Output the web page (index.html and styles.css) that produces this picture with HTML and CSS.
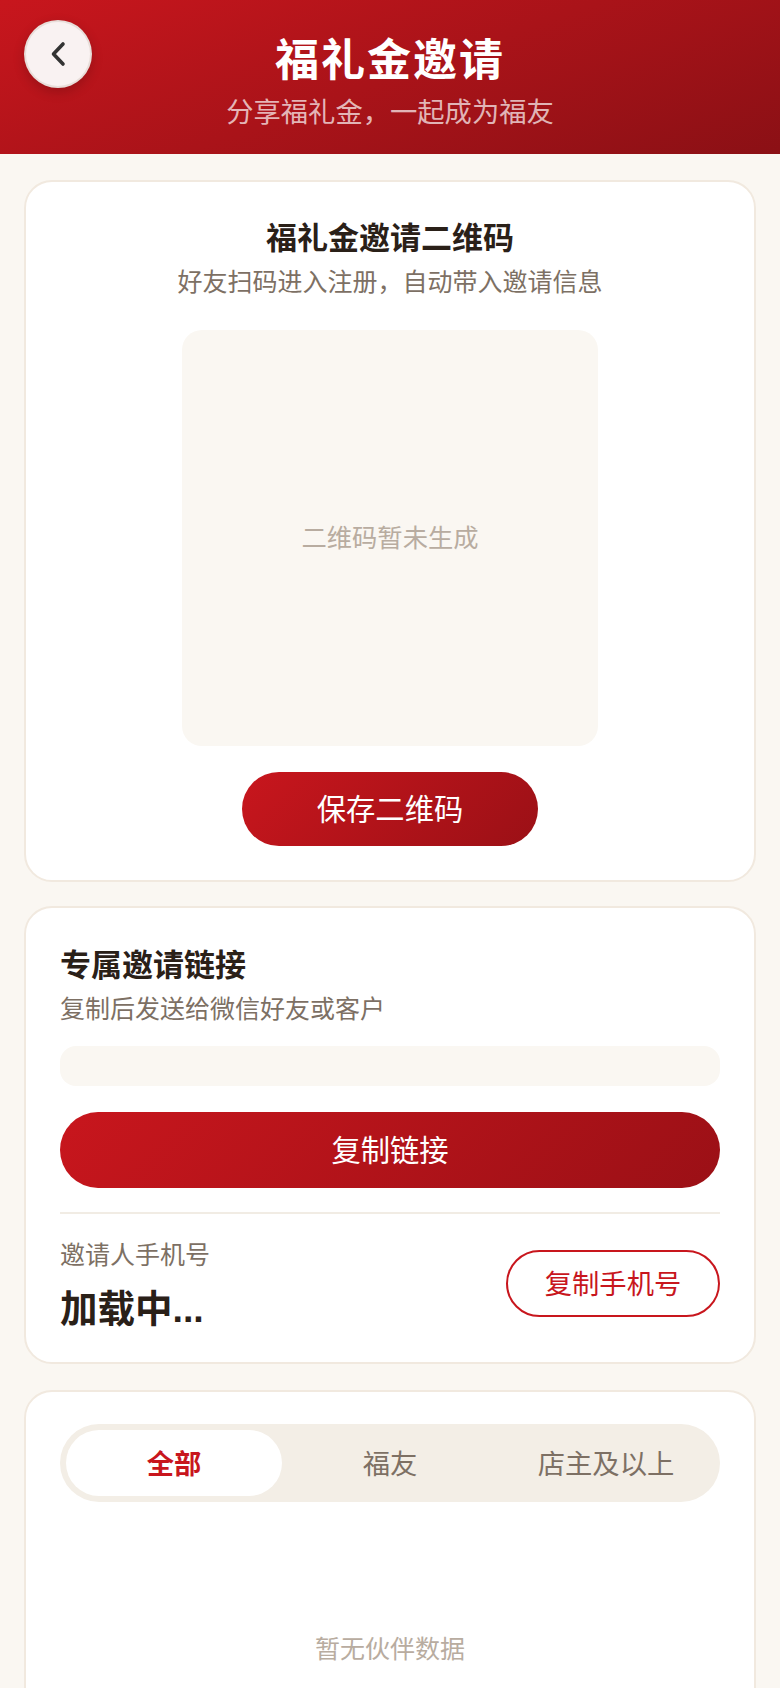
FILE: index.html
```html
<!DOCTYPE html>
<html lang="zh-CN">
<head>
<meta charset="utf-8">
<title>福礼金邀请</title>
<link rel="stylesheet" href="styles.css">
</head>
<body>
<div class="page">
  <header class="hero">
    <button class="back" aria-label="返回">
      <svg width="24" height="28" viewBox="0 0 24 28" class="back-icon"><path d="M17 4 L7.5 14 L17 24" fill="none" stroke="#333333" stroke-width="3.6" stroke-linecap="round" stroke-linejoin="round"/></svg>
    </button>
    <h1 class="hero-title">福礼金邀请</h1>
    <p class="hero-sub">分享福礼金，一起成为福友</p>
  </header>
  <main class="content">
    <section class="card card-qr">
      <h2 class="qr-title">福礼金邀请二维码</h2>
      <p class="qr-sub">好友扫码进入注册，自动带入邀请信息</p>
      <div class="qr-box">二维码暂未生成</div>
      <button class="btn btn-save">保存二维码</button>
    </section>
    <section class="card card-link">
      <h2 class="link-title">专属邀请链接</h2>
      <p class="link-sub">复制后发送给微信好友或客户</p>
      <div class="link-box"></div>
      <button class="btn btn-copy">复制链接</button>
      <div class="phone-row">
        <div class="phone-info">
          <div class="phone-label">邀请人手机号</div>
          <div class="phone-value">加载中...</div>
        </div>
        <button class="btn-outline">复制手机号</button>
      </div>
    </section>
    <section class="card card-list">
      <div class="tabs">
        <div class="tab active">全部</div>
        <div class="tab">福友</div>
        <div class="tab">店主及以上</div>
      </div>
      <div class="empty">暂无伙伴数据</div>
    </section>
  </main>
</div>
</body>
</html>
```
FILE: styles.css
```css
* { box-sizing: border-box; margin: 0; padding: 0; }
html, body { height: 1688px; overflow: hidden; }
body { background: #faf7f2; font-family: "Liberation Sans", "Noto Sans CJK SC", sans-serif; color: #2a2018; }
button { font-family: inherit; border: 0; }
.page { display: flex; flex-direction: column; }
.hero { position: relative; height: 154px; background: linear-gradient(160deg, #c8161d 0%, #8b1015 100%); color: #fff; text-align: center; padding-top: 35px; }
.back { position: absolute; left: 24px; top: 20px; width: 68px; height: 68px; border-radius: 50%; background: #f9f2f2; border: 2px solid rgba(230,220,215,.9); box-shadow: 0 4px 12px rgba(0,0,0,.18); display: flex; align-items: center; justify-content: center; }
.hero-title { font-size: 44px; line-height: 52px; font-weight: 700; letter-spacing: 2px; }
.hero-sub { font-size: 27.3px; line-height: 36px; margin-top: 8px; color: rgba(255,255,255,.7); }
.content { padding: 26px 24px 0; display: flex; flex-direction: column; gap: 24px; }
.card { background: #fff; border: 2px solid #f1e9df; border-radius: 28px; padding: 34px; }
.card-qr { display: flex; flex-direction: column; align-items: center; height: 702px; padding-top: 36px; }
.qr-title { font-size: 31px; line-height: 42px; font-weight: 700; }
.qr-sub { font-size: 25px; line-height: 36px; color: #7d7064; margin-top: 4px; }
.qr-box { width: 416px; height: 416px; margin-top: 30px; padding-bottom: 4px; background: #faf7f2; border-radius: 20px; display: flex; align-items: center; justify-content: center; font-size: 25.3px; color: #b8aca0; }
.btn { color: #fff; background: linear-gradient(135deg, #c8161d 0%, #9b1016 100%); font-size: 29.3px; padding-bottom: 4px; }
.btn-save { width: 296px; height: 74px; border-radius: 37px; margin-top: 26px; }
.card-link { height: 458px; padding-top: 37px; }
.link-title { font-size: 31px; line-height: 42px; font-weight: 700; }
.link-sub { font-size: 25px; line-height: 36px; color: #7d7064; margin-top: 4px; }
.link-box { height: 40px; background: #faf7f2; border-radius: 16px; margin-top: 19px; }
.btn-copy { width: 100%; height: 76px; border-radius: 38px; margin-top: 26px; }
.phone-row { margin-top: 24px; border-top: 2px solid #f1ece4; display: flex; justify-content: space-between; align-items: center; padding-top: 23px; }
.phone-label { font-size: 25px; line-height: 36px; color: #7d7064; }
.phone-value { font-size: 37.5px; line-height: 42px; font-weight: 700; margin-top: 15px; }
.btn-outline { width: 214px; height: 67px; border-radius: 34px; border: 2px solid #c8161d; background: #fff; color: #c8161d; font-size: 27.3px; padding-bottom: 4px; }
.card-list { height: 340px; padding-top: 32px; margin-top: 2px; }
.tabs { display: flex; height: 78px; padding: 6px; border-radius: 39px; background: #f3eee6; }
.tab { flex: 1; display: flex; align-items: center; justify-content: center; font-size: 27.3px; color: #7d7064; border-radius: 33px; padding-bottom: 2px; }
.tab.active { background: #fff; color: #c8161d; font-weight: 700; }
.empty { text-align: center; font-size: 25px; line-height: 36px; color: #b8aca0; margin-top: 129px; }
```
